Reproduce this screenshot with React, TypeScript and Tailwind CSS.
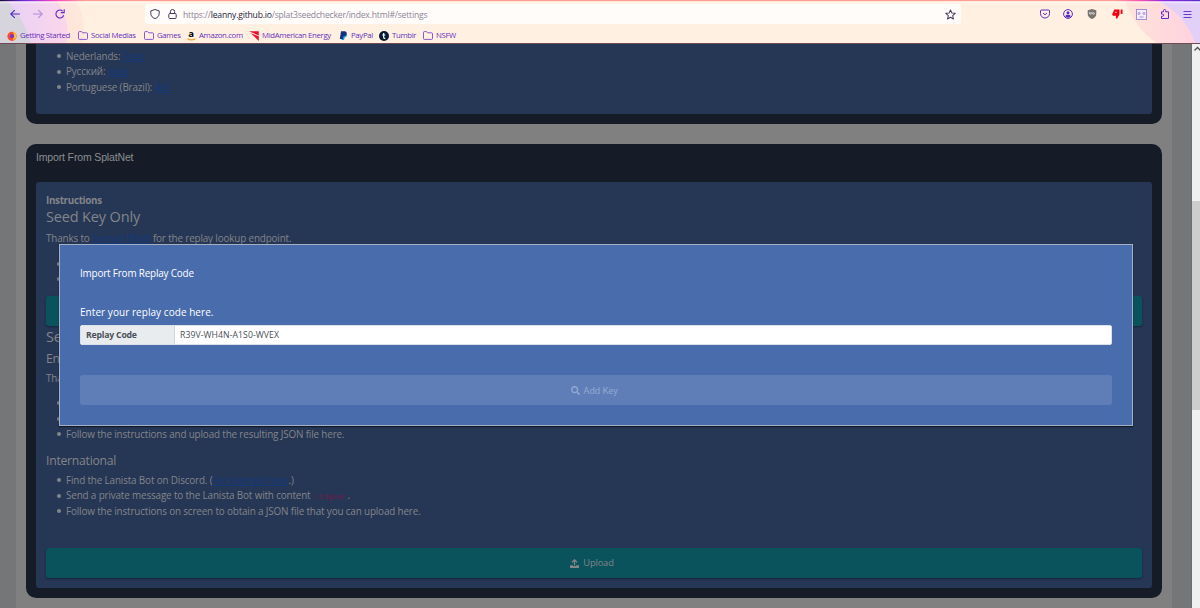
import type { ReactNode } from 'react';
import { FaSearch } from 'react-icons/fa';

export default function App() {
  return (
    <div className="flex h-[608px] w-[1200px] flex-col overflow-hidden bg-[#808080] font-['Open_Sans',sans-serif]">
      <BrowserChrome />
      <div className="relative flex min-h-0 flex-1">
        <Page />
        <Scrollbar />
        <ReplayModal />
      </div>
    </div>
  );
}

function BrowserChrome() {
  return (
    <header className="relative h-11 shrink-0 overflow-hidden border-b border-[#6f4a55] bg-[#fff0e2]">
      <ThemeArt />
      <div className="relative flex h-7 items-center">
        <div className="flex w-[145px] items-center gap-[13px] pl-[10px] text-[#5b2bc4]">
          <svg className="size-[10px]" viewBox="0 0 10 10" fill="none" stroke="currentColor" strokeWidth="1.1" strokeLinecap="round" strokeLinejoin="round">
            <path d="M9.5 5H.8M4.5 1.3.8 5l3.7 3.7" />
          </svg>
          <svg className="size-[10px] opacity-40" viewBox="0 0 10 10" fill="none" stroke="currentColor" strokeWidth="1.1" strokeLinecap="round" strokeLinejoin="round">
            <path d="M.5 5h8.7M5.5 1.3 9.2 5 5.5 8.7" />
          </svg>
          <svg className="-ml-px size-[10px]" viewBox="0 0 10 10" fill="none" stroke="currentColor" strokeWidth="1.1">
            <path d="M8.7 6.3A4 4 0 1 1 7.8 2.2M9.2.2v3.4H5.8" />
          </svg>
        </div>
        <div className="flex h-5 w-[816px] items-center rounded-[3px] bg-[#fffcfa] px-[5px]">
          <svg className="size-[10px]" viewBox="0 0 10 10" fill="none" stroke="#453b60" strokeWidth="1">
            <path d="M5 .5 9.2 1.9v2.5C9.2 7 7.5 8.8 5 9.6 2.500 8.800.8 7 .8 4.400V1.900Z" />
          </svg>
          <svg className="ml-2 h-[10px] w-[9px]" viewBox="0 0 9 10" fill="none" stroke="#453b60" strokeWidth="1">
            <rect x=".8" y="4.5" width="7.4" height="5" rx="1" />
            <path d="M2.400 4.500V2.600a2.100 2.100 0 0 1 4.200 0v1.900" />
          </svg>
          <span className="mt-[2px] ml-[6px] text-[8.6px] leading-none tracking-[-0.2px] whitespace-nowrap text-[#8b8598]">
            https://<span className="text-[#241a3a]">leanny.github.io</span>/splat3seedchecker/index.html#/settings
          </span>
          <svg className="ml-auto size-[11px]" viewBox="0 0 24 24" fill="none" stroke="#453b60" strokeWidth="2.2" strokeLinejoin="round">
            <path d="m12 2 3 6.800 7.300.7-5.500 4.900 1.600 7.300L12 17.900l-6.400 3.800 1.600-7.300-5.500-4.900 7.300-.7Z" />
          </svg>
        </div>
        <div className="ml-auto flex items-center gap-[13px] pr-2 text-[#5b2bc4]">
          <svg className="size-[10px]" viewBox="0 0 10 10" fill="none" stroke="currentColor" strokeWidth="1">
            <path d="M1.500 1h7a1 1 0 0 1 1 1v2.500a4.500 4.500 0 0 1-9 0V2a1 1 0 0 1 1-1ZM3 4l2 1.800L7 4" />
          </svg>
          <svg className="size-[10px]" viewBox="0 0 10 10" fill="none" stroke="currentColor">
            <circle cx="5" cy="5" r="4.4" />
            <circle cx="5" cy="3.7" r="1.5" fill="currentColor" stroke="none" />
            <path d="M2.400 7.500C2.400 6 3.400 5.700 5 5.700S7.600 6 7.600 7.500 2.400 9 2.400 7.500Z" fill="currentColor" stroke="none" />
          </svg>
          <svg className="ml-px size-[10px]" viewBox="0 0 10 10">
            <path d="M5 0 9.300 1.300V5C9.300 7.500 7.500 9 5 10 2.500 9 .7 7.500.7 5V1.300Z" fill="#77756f" />
            <path d="M2.500 3v1.500q0 .8.700.8t.7-.8V3M5 3v2.300" fill="none" stroke="#f4eeee" strokeWidth=".7" />
            <circle cx="6.5" cy="4.5" r=".8" fill="none" stroke="#f4eeee" strokeWidth=".7" />
          </svg>
          <svg className="ml-[2px] h-[10px] w-[11px]" viewBox="0 0 11 10">
            <path d="M2.300.5h5.200v5L5 9.800q-1.800-.3-.9-3H1.300Q0 6.600.2 5.200Z" fill="#f3000a" />
            <path d="M8.700.5h1.800v4.500H8.700Z" fill="#f3000a" />
            <path d="M2.800 3.300h2" stroke="#ffe6dc" strokeWidth=".9" />
          </svg>
          <svg className="size-[11px]" viewBox="0 0 11 11" fill="none" stroke="#9a86d6" strokeWidth=".9">
            <rect x=".5" y=".5" width="10" height="10" fill="#f3ecfa" />
            <circle cx="3" cy="4.5" r="1" />
            <circle cx="8" cy="4.5" r="1" />
            <path d="M3.500 8h4" />
          </svg>
          <svg className="size-[10px]" viewBox="0 0 10 10" fill="none" stroke="currentColor" strokeLinejoin="round">
            <path d="M1.500 4V2.800h2V1.600a1.100 1.100 0 0 1 2.200 0v1.200h2.800v6.700H1.500V7.300h1a1 1 0 0 0 0-2.200h-1Z" />
          </svg>
          <svg className="size-[9px]" viewBox="0 0 9 9" stroke="currentColor" strokeWidth=".9">
            <path d="M.5 1.500h8M.5 4.500h8M.5 7.500h8" />
          </svg>
        </div>
      </div>
      <nav className="relative flex h-[15px] items-center text-[7.8px] leading-none tracking-[-0.35px] whitespace-nowrap text-[#6a30bd]">
        <Bookmark className="ml-[7px] w-[71px]" label="Getting Started" icon={<FirefoxIcon />} />
        <Bookmark className="w-[66px]" label="Social Medias" icon={<FolderIcon />} />
        <Bookmark className="w-[42px]" label="Games" icon={<FolderIcon />} />
        <Bookmark className="w-[63px]" label="Amazon.com" icon={<AmazonIcon />} />
        <Bookmark
          className="w-[90px]"
          label="MidAmerican Energy"
          icon={
            <svg className="size-[10px] shrink-0" viewBox="0 0 10 10">
              <path d="M0 .3h9.800v4.200ZM1.500 2l8.300 3.300V10Z" fill="#ec1030" />
            </svg>
          }
        />
        <Bookmark
          className="w-10"
          label="PayPal"
          icon={
            <svg className="size-[9px] shrink-0" viewBox="0 0 9 9">
              <path d="M3 2h4.500Q9 5.800 5.800 6.200L5 9H2.500Z" fill="#149bdf" />
              <path d="M2 .3h3.500C9 .3 8 5.300 4.500 5.300L3.700 8H.8Z" fill="#103080" />
            </svg>
          }
        />
        <Bookmark
          className="w-11"
          label="Tumblr"
          icon={
            <svg className="size-[10px] shrink-0" viewBox="0 0 10 10">
              <circle cx="5" cy="5" r="5" fill="#071b35" />
              <path d="M4.700 2v4.500q0 1.200 1.600.8M3.300 4h3" fill="none" stroke="#fff" strokeWidth="1.2" />
            </svg>
          }
        />
        <Bookmark label="NSFW" icon={<FolderIcon />} />
      </nav>
    </header>
  );
}

// Swirls of the browser theme at both ends of the toolbar
function ThemeArt() {
  return (
    <svg className="absolute inset-0 h-11 w-[1200px]" viewBox="0 0 1200 44" preserveAspectRatio="none">
      <defs>
        <linearGradient id="lilac" x1="0" y1="0" x2="1" y2="0">
          <stop offset="0" stopColor="#e6d0f8" />
          <stop offset="1" stopColor="#fbd6ea" />
        </linearGradient>
        <linearGradient id="peach" x1="0" y1="0" x2="1" y2="0">
          <stop offset="0" stopColor="#ffdce0" />
          <stop offset="1" stopColor="#ffe8da" />
        </linearGradient>
        <linearGradient id="rose" x1="0" y1="0" x2="1" y2="0">
          <stop offset="0" stopColor="#ffe4d8" />
          <stop offset="1" stopColor="#ffd0e0" />
        </linearGradient>
        <linearGradient id="edge" x1="0" y1="0" x2="1" y2="0">
          <stop offset="0" stopColor="#1d0b3a" />
          <stop offset=".02" stopColor="#6a2be0" />
          <stop offset=".045" stopColor="#ff3fc0" />
          <stop offset=".07" stopColor="#ffa097" />
          <stop offset=".93" stopColor="#ffa097" />
          <stop offset=".95" stopColor="#ff4fb0" />
          <stop offset=".97" stopColor="#8a2be0" />
          <stop offset="1" stopColor="#5a2bd0" />
        </linearGradient>
      </defs>
      <path d="M0 0H75Q87 16 83 44H0Z" fill="url(#peach)" />
      <path d="M0 0H56Q72 22 66 44H0Z" fill="url(#lilac)" />
      <path d="M0 0H5Q22 14 31 44H0Z" fill="#d6d4dd" />
      <path d="M1125 0h75v44h-42Q1134 28 1125 0Z" fill="url(#rose)" />
      <path d="M1155 0h45v44h-4Q1184 12 1155 0Z" fill="#e2d0f8" />
      <path d="M0 0h1200v1.200H0Z" fill="url(#edge)" />
      <path d="M0 1.200h1200v2H0Z" fill="#fff" opacity=".4" />
    </svg>
  );
}

function Bookmark({ label, icon, className = '' }: { label: string; icon: ReactNode; className?: string }) {
  return (
    <div className={`flex shrink-0 items-center gap-[3px] ${className}`}>
      {icon}
      <span>{label}</span>
    </div>
  );
}

function FolderIcon() {
  return (
    <svg className="h-[9px] w-[10px] shrink-0" viewBox="0 0 10 9" fill="none" stroke="#7d45cf" strokeWidth=".9" strokeLinejoin="round">
      <path d="M.5 7.500v-6Q.5.600 1.400.600h2.200l1 1.200h4Q9.500 1.800 9.500 2.700v4.800q0 .9-.9.9H1.400q-.9 0-.9-.9Z" />
    </svg>
  );
}

function FirefoxIcon() {
  return (
    <svg className="size-[10px] shrink-0" viewBox="0 0 10 10">
      <circle cx="5" cy="5.3" r="4.6" fill="#ff4a2c" />
      <path d="M5.500 0Q10 2.500 9.600 6 8.500 9 5.500 9.300 8.500 5 5.500 0Z" fill="#ffc32b" />
      <circle cx="5" cy="5.2" r="2.1" fill="#8131d8" />
    </svg>
  );
}

function AmazonIcon() {
  return (
    <span className="flex h-[10px] w-[10px] shrink-0 flex-col items-center">
      <span className="text-[9.5px] leading-[6px] font-bold text-black">a</span>
      <svg className="mt-px h-[3px] w-[9px] shrink-0" viewBox="0 0 9 3" fill="none" stroke="#f6a12b" strokeWidth="1.2">
        <path d="M.5.700q4 2.500 8 0" />
      </svg>
    </span>
  );
}

function Page() {
  return (
    <main className="flex min-w-0 flex-1 flex-col overflow-hidden border-r border-[#6c6d6e] bg-[#757678] pr-[19px] pl-4 text-[9.9px] tracking-[-0.15px] text-[#838589]">
      <div className="h-[564px] shrink-0 bg-[#808080] px-[10px]">
        <section className="h-20 rounded-b-[10px] bg-[#151c27] px-[10px] pb-[10px]">
          <div className="h-[70px] rounded-b-[3px] bg-[#263655] pt-[4.6px] pl-[30px]">
            <Item>Nederlands: <Link>Fogu</Link></Item>
            <Item>Русский: <Link>yaga</Link></Item>
            <Item>Portuguese (Brazil): <Link>Ant</Link></Item>
          </div>
        </section>

        <section className="mt-5 h-[454px] rounded-[10px] bg-[#151c27] px-[10px]">
          <h2 className="h-[38px] pt-[6px] font-['Liberation_Sans',sans-serif] text-[10.5px] leading-[15px] text-[#8b8d90]">
            Import From SplatNet
          </h2>
          <div className="flex h-[406px] flex-col rounded-[3px] bg-[#263655] px-[10px] pt-[11px]">
            <p className="text-[9.8px] leading-4 font-bold tracking-[-0.3px]">Instructions</p>
            <h3 className="-mt-px text-[14.5px] leading-[18px]">Seed Key Only</h3>
            <p className="mt-[5px] leading-[15px]">
              Thanks to <Link>Samuel Elliott</Link> for the replay lookup endpoint.
            </p>
            <div className="mt-[10px] pl-5">
              <Item />
              <Item />
            </div>
            <div className="mt-[9px] h-[30px] shrink-0 rounded-[3px] bg-[#0b535c] shadow-[0_1px_2px_#16243b]" />
            <h3 className="mt-px text-[14.5px] leading-[20px]">Seed</h3>
            <h4 className="mt-1 text-[12.2px] leading-[15px]">English</h4>
            <p className="mt-[5px] leading-[15px]">Thanks to</p>
            <div className="mt-[10px] pl-5">
              <Item />
              <Item />
              <Item>Follow the instructions and upload the resulting JSON file here.</Item>
            </div>
            <h4 className="mt-[10px] text-[12.2px] leading-[17px] tracking-[-0.25px]">International</h4>
            <div className="mt-[3.6px] pl-5">
              <Item>Find the Lanista Bot on Discord. (<Link>For example here</Link>.)</Item>
              <Item>
                Send a private message to the Lanista Bot with content{' '}
                <code className="px-px font-['Liberation_Mono',monospace] text-[8px] text-[#6c1e4b]">!s3gear</code>.
              </Item>
              <Item>Follow the instructions on screen to obtain a JSON file that you can upload here.</Item>
            </div>
            <button className="mt-auto mb-[10px] flex h-[30px] shrink-0 items-center justify-center gap-[4px] rounded-[3px] bg-[#0b535c] pr-[4px] text-[9.3px] shadow-[0_1px_2px_#16243b]">
              <UploadIcon />
              Upload
            </button>
          </div>
        </section>
      </div>
    </main>
  );
}

function Item({ children }: { children?: ReactNode }) {
  return (
    <div className="flex h-[15.4px] items-center whitespace-nowrap">
      <span className="mr-[5px] ml-[-9px] size-1 rounded-full bg-current" />
      <span>{children}</span>
    </div>
  );
}

function Link({ children }: { children: ReactNode }) {
  return <span className="tracking-[-0.3px] text-[#14397c] underline">{children}</span>;
}

function UploadIcon() {
  return (
    <svg className="size-[9px]" viewBox="0 0 9 9">
      <path d="M0 6.300h3v.7h3v-.7h3V9H0Z" fill="currentColor" />
      <path d="M4.500 6.300V1.200M2 3.200 4.500.8 7 3.200" fill="none" stroke="currentColor" strokeWidth="1.3" />
    </svg>
  );
}

function Scrollbar() {
  return (
    <div className="flex w-2 shrink-0 flex-col bg-[#f0f0f0]">
      <svg className="mt-[2px] h-[6px] w-2" viewBox="0 0 8 6" fill="none" stroke="#505050" strokeWidth="1.3">
        <path d="m2.500 4.500 3-3 3 3" />
      </svg>
      <div className="mt-[149px] h-[209px] bg-[#cdcdcd]" />
    </div>
  );
}

function ReplayModal() {
  return (
    <div className="absolute top-[200px] left-[59px] flex h-[182px] w-[1074px] flex-col border border-[#a4afc4] bg-[#496cad] px-5 text-white shadow-[0_1px_1px_#111a28]">
      <h2 className="mt-5 text-[9.9px] leading-4 tracking-[-0.17px]">Import From Replay Code</h2>
      <p className="mt-[23px] text-[10px] leading-4 tracking-[0.05px]">Enter your replay code here.</p>
      <div className="mt-[5px] flex h-5 shrink-0 items-center overflow-hidden rounded-[2px] border border-[#dce1e9] bg-white text-[8.7px] text-[#495057]">
        <span className="flex h-full w-[94px] items-center border-r border-[#ced4da] bg-[#e9ecef] pt-[2px] pl-[5px] font-bold tracking-[-0.2px]">
          Replay Code
        </span>
        <span className="pt-[2px] pl-[5px] tracking-[0.05px]">R39V-WH4N-A1S0-WVEX</span>
      </div>
      <button className="mt-[30px] flex h-[30px] shrink-0 items-center justify-center gap-[3px] rounded-[3px] bg-[#5f7eb7] pt-[2px] pr-[3px] font-[Roboto,sans-serif] text-[9.5px] text-[#91a8d0]">
        <FaSearch className="mb-px size-[9px]" />
        Add Key
      </button>
    </div>
  );
}
